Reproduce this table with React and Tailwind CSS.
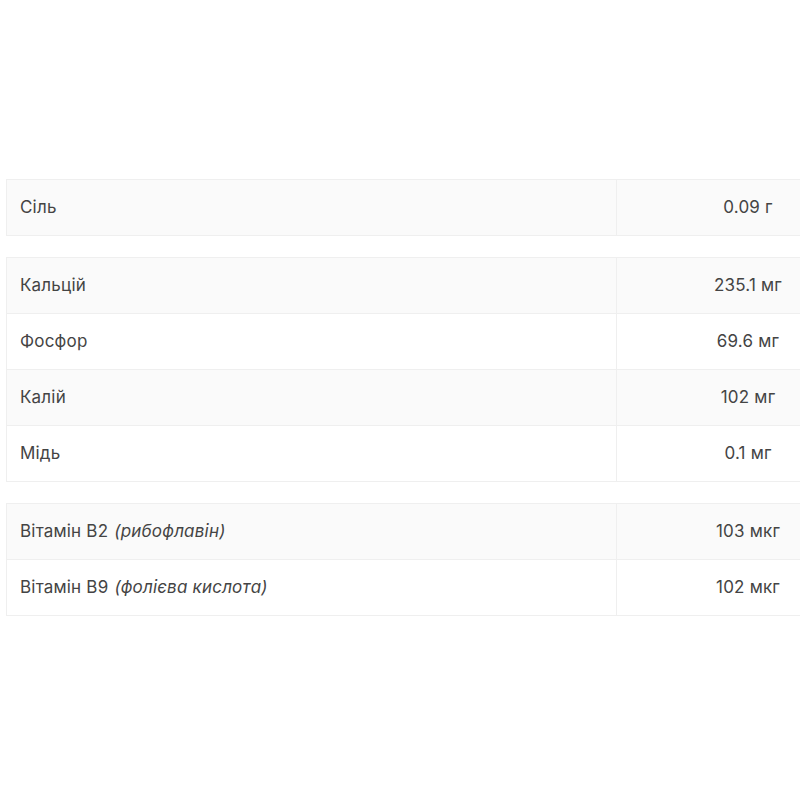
import React from "react";

const groups = [
  [["Сіль", null, "0.09 г"]],
  [
    ["Кальцій", null, "235.1 мг"],
    ["Фосфор", null, "69.6 мг"],
    ["Калій", null, "102 мг"],
    ["Мідь", null, "0.1 мг"],
  ],
  [
    ["Вітамін B2", "(рибофлавін)", "103 мкг"],
    ["Вітамін B9", "(фолієва кислота)", "102 мкг"],
  ],
];

export default function App() {
  return (
    <div
      className="w-[800px] h-[800px] overflow-hidden bg-white pt-[179px] pl-[6px] text-[17px] tracking-[0.2px] text-[#444444]"
      style={{ fontFamily: "Inter, 'Noto Sans', sans-serif" }}
    >
      <div className="flex flex-col gap-[21px] w-[874px]">
        {groups.map((rows, gi) => (
          <div key={gi} className="border border-[#efefef]">
            {rows.map(([label, note, value], ri) => (
              <div
                key={ri}
                className={`grid grid-cols-[610px_1fr] ${ri > 0 ? "h-[56px] border-t border-[#efefef]" : "h-[55px]"} ${ri % 2 === 0 ? "bg-[#fafafa]" : "bg-white"}`}
              >
                <div className="flex items-center pl-[13px] border-r border-[#efefef]">
                  <span>{label}</span>
                  {note && <span className="italic ml-[6px]">{note}</span>}
                </div>
                <div className="flex items-center justify-center">{value}</div>
              </div>
            ))}
          </div>
        ))}
      </div>
    </div>
  );
}
